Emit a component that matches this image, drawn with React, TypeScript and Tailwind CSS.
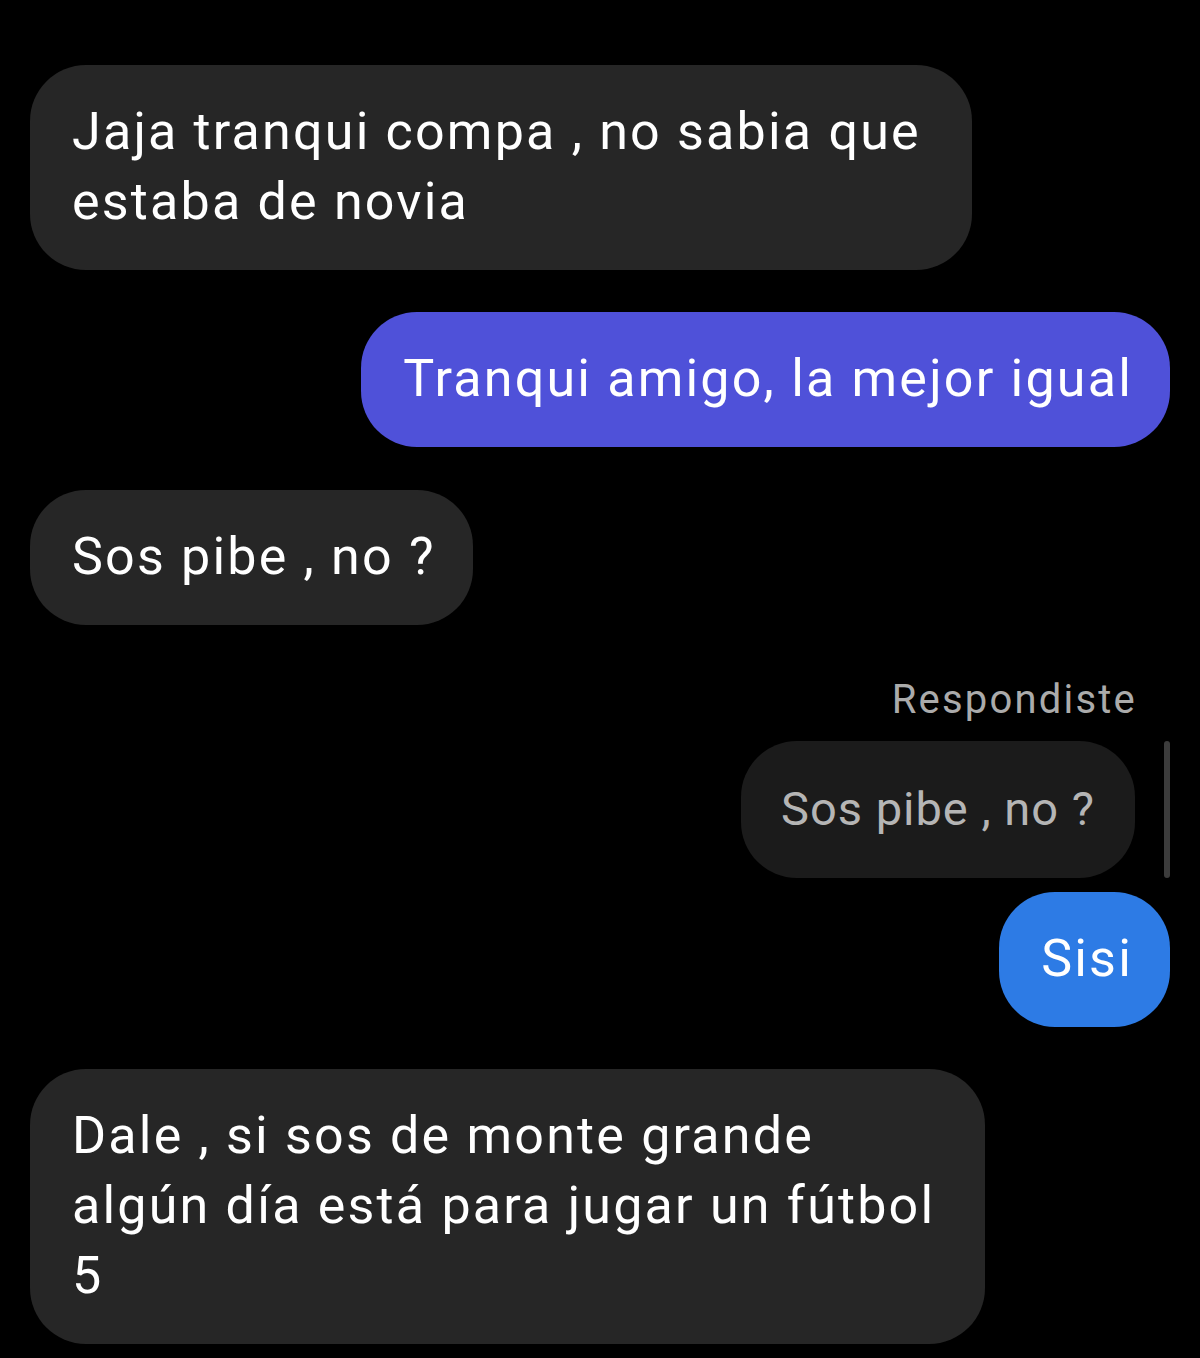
const FONT = "font-['Roboto','Noto_Sans',sans-serif]";

function Bubble({ children, className }: { children: React.ReactNode; className: string }) {
  return (
    <div className={`rounded-[56px] pl-[42px] pr-[37px] pt-[32px] pb-[33px] text-[52px] leading-[70px] tracking-[2.2px] ${className}`}>
      {children}
    </div>
  );
}

export default function App() {
  return (
    <div className={`min-h-[1358px] w-[1200px] bg-black ${FONT} pt-[65px] px-[30px]`}>
      <div className="flex flex-col">
        <div className="flex justify-start">
          <Bubble className="w-[942px] bg-[#262626] text-white">
            Jaja tranqui compa , no sabia que estaba de novia
          </Bubble>
        </div>

        <div className="flex justify-end mt-[42px]">
          <Bubble className="bg-[#4f51d9] text-white">Tranqui amigo, la mejor igual</Bubble>
        </div>

        <div className="flex justify-start mt-[43px]">
          <Bubble className="bg-[#262626] text-white">Sos pibe , no ?</Bubble>
        </div>

        <div className="flex justify-end pr-[33px] mt-[50px] text-[40px] leading-[50px] tracking-[2.2px] text-[#ababab]">
          Respondiste
        </div>

        <div className="flex justify-end items-stretch gap-[29px] mt-[16px]">
          <div className="rounded-[56px] pl-[40px] pr-[40px] pt-[33px] pb-[34px] text-[47px] leading-[70px] tracking-[1px] bg-[#1b1b1b] text-[#b5b5b5]">
            Sos pibe , no ?
          </div>
          <div className="w-[6px] rounded-full bg-[#3c3c3c]" />
        </div>

        <div className="flex justify-end mt-[14px]">
          <Bubble className="bg-[#2d7be5] text-white">Sisi</Bubble>
        </div>

        <div className="flex justify-start mt-[42px]">
          <Bubble className="w-[955px] bg-[#262626] text-white">
            Dale , si sos de monte grande algún día está para jugar un fútbol 5
          </Bubble>
        </div>
      </div>
    </div>
  );
}
